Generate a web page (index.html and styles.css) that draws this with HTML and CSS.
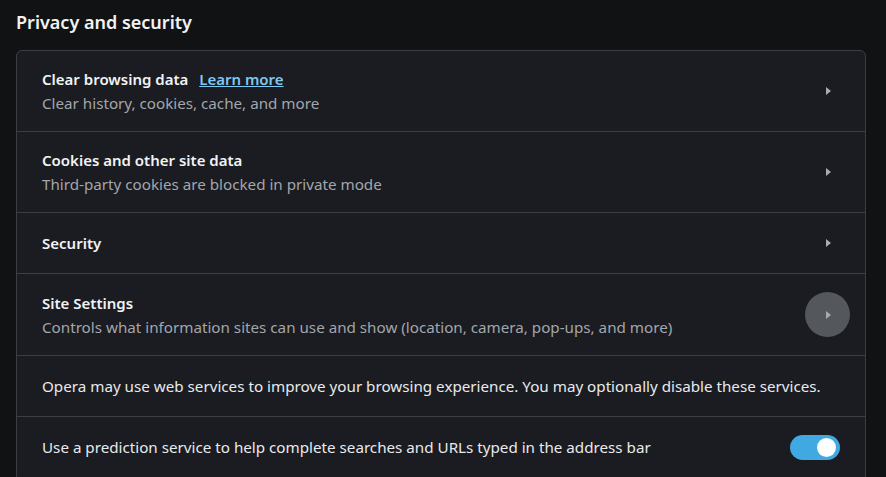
FILE: index.html
```html
<!DOCTYPE html>
<html lang="en">
<head>
  <meta charset="UTF-8" />
  <title>Privacy and security</title>
  <link rel="stylesheet" href="styles.css">
</head>
<body>
  <h2 class="section-title">Privacy and security</h2>
  <div class="settings-card">
    <div class="row">
      <div class="row-text">
        <div class="row-label">Clear browsing data <a href="#" class="learn-more">Learn more</a></div>
        <div class="row-sub">Clear history, cookies, cache, and more</div>
      </div>
      <div class="arrow-btn"><span class="arrow"></span></div>
    </div>
    <div class="row">
      <div class="row-text">
        <div class="row-label">Cookies and other site data</div>
        <div class="row-sub">Third-party cookies are blocked in private mode</div>
      </div>
      <div class="arrow-btn"><span class="arrow"></span></div>
    </div>
    <div class="row short">
      <div class="row-text">
        <div class="row-label">Security</div>
      </div>
      <div class="arrow-btn"><span class="arrow"></span></div>
    </div>
    <div class="row tall">
      <div class="row-text">
        <div class="row-label">Site Settings</div>
        <div class="row-sub">Controls what information sites can use and show (location, camera, pop-ups, and more)</div>
      </div>
      <div class="arrow-btn hover"><span class="arrow"></span></div>
    </div>
    <div class="row short">
      <div class="row-text">
        <div class="row-plain">Opera may use web services to improve your browsing experience. You may optionally disable these services.</div>
      </div>
    </div>
    <div class="row short last">
      <div class="row-text">
        <div class="row-plain">Use a prediction service to help complete searches and URLs typed in the address bar</div>
      </div>
      <div class="toggle on"><span class="knob"></span></div>
    </div>
  </div>
</body>
</html>
```

FILE: styles.css
```css
body {
  margin: 0;
  background-color: #111214;
  font-family: "Noto Sans", "Open Sans", sans-serif;
  color: #e8eaed;
  width: 886px;
  height: 477px;
  overflow: hidden;
}
.section-title {
  font-size: 18px;
  font-weight: 600;
  margin: 0;
  padding: 9px 16px 0;
  height: 41px;
  line-height: 26px;
  color: #f1f3f4;
}
.settings-card {
  margin-left: 16px;
  width: 848px;
  background-color: #1a1c21;
  border: 1px solid #3a3e46;
  border-radius: 6px;
}
.row {
  display: flex;
  align-items: center;
  min-height: 80px;
  padding: 0 15px 0 25px;
  border-top: 1px solid #3a3e46;
}
.row:first-child {
  border-top: none;
}
.row.short {
  min-height: 60px;
}
.row.tall {
  min-height: 81px;
}
.row.last {
  min-height: 60px;
  padding-bottom: 4px;
  padding-top: 0;
}
.row-text {
  flex: 1;
}
.row-label {
  font-size: 15px;
  font-weight: 600;
  line-height: 24px;
  color: #f1f3f4;
}
.row-sub {
  font-size: 15.2px;
  line-height: 24px;
  color: #a3a6ab;
}
.row-plain {
  font-size: 15.2px;
  line-height: 24px;
  color: #e8eaed;
}
.learn-more {
  color: #7ec8f2;
  text-decoration: underline;
  margin-left: 7px;
}
.arrow-btn {
  width: 45px;
  height: 45px;
  border-radius: 50%;
  display: flex;
  align-items: center;
  justify-content: center;
}
.arrow-btn.hover {
  background-color: #54575b;
}
.arrow {
  width: 0;
  height: 0;
  border-top: 4px solid transparent;
  border-bottom: 4px solid transparent;
  border-left: 5px solid #a8abb0;
  margin-left: 2px;
}
.toggle {
  width: 50px;
  height: 25px;
  border-radius: 13px;
  background-color: #41a9e1;
  position: relative;
  margin-right: 10px;
}
.knob {
  position: absolute;
  top: 3px;
  right: 4px;
  width: 19px;
  height: 19px;
  border-radius: 50%;
  background-color: #ffffff;
}
```
